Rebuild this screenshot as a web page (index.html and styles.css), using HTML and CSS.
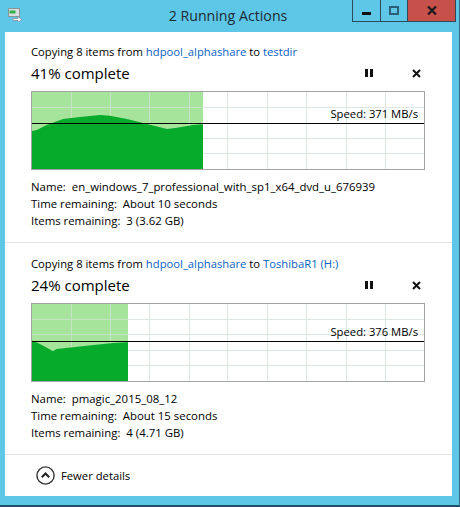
FILE: index.html
```html
<!DOCTYPE html>
<html>
<head>
<meta charset="utf-8">
<link rel="stylesheet" href="styles.css">
</head>
<body>
<div class="window">
  <div class="titlebar">
    <svg class="app-icon" width="14" height="14" viewBox="0 0 14 14">
      <rect x="0.5" y="0.5" width="11" height="8" fill="#d9dde0" stroke="#8a9398"/>
      <rect x="1.5" y="2.5" width="6" height="3" fill="#2bb34a"/>
      <path d="M5 10.5h5v-2l3.5 3-3.5 3v-2H5z" fill="#ffffff" stroke="#7d8a92" stroke-width="0.8"/>
    </svg>
    <div class="title">2 Running Actions</div>
    <div class="caption-buttons">
      <div class="cb cb-min"><span class="min-glyph"></span></div>
      <div class="cb cb-max"><span class="max-glyph"></span></div>
      <div class="cb cb-close">
        <svg width="10" height="9" viewBox="0 0 10 9"><path d="M1 0.5l8 8M9 0.5l-8 8" stroke="#1a1a1a" stroke-width="2.2"/></svg>
      </div>
    </div>
  </div>
  <div class="content">
    <section class="op op-first">
      <div class="op-head">Copying 8 items from <span class="link">hdpool_alphashare</span> to <span class="link">testdir</span></div>
      <div class="op-row">
        <div class="pct">41% complete</div>
        <div class="ctrls">
          <svg class="pause" width="8" height="8" viewBox="0 0 8 8"><rect x="0" y="0" width="3" height="8" fill="#111"/><rect x="5" y="0" width="3" height="8" fill="#111"/></svg>
          <svg class="stop" width="9" height="9" viewBox="0 0 9 9"><path d="M1 1l7 7M8 1l-7 7" stroke="#111" stroke-width="2"/></svg>
        </div>
      </div>
      <div class="graph">
        <svg class="chart" width="392" height="77" viewBox="0 0 392 77">
          <rect x="0" y="0" width="171" height="77" fill="#a6e39b"/>
          <g stroke="#d2e2d6" stroke-width="1" opacity="0.75">
            <path d="M39.5 0V77M78.5 0V77M117.5 0V77M157.5 0V77M195.5 0V77M235.5 0V77M274.5 0V77M314.5 0V77M353.5 0V77"/>
            <path d="M0 15.5H392M0 46.5H392M0 61.5H392"/>
          </g>
          <path d="M0 39 L4.7 38 L14.7 33 L31 27 L48 25 L68 23 L78 23.7 L95 27 L115 32 L135 37 L145 35.7 L161 33 L171 32.3 L171 77 L0 77 Z" fill="#06ab2b"/>
          <path d="M0 31.5H392" stroke="#000" stroke-width="1.2"/>
        </svg>
        <div class="speed speed-1">Speed: 371 MB/s</div>
      </div>
      <div class="details">
        <div>Name:&nbsp; en_windows_7_professional_with_sp1_x64_dvd_u_676939</div>
        <div>Time remaining:&nbsp; About 10 seconds</div>
        <div>Items remaining:&nbsp; 3 (3.62 GB)</div>
      </div>
    </section>
    <section class="op op-second">
      <div class="op-head">Copying 8 items from <span class="link">hdpool_alphashare</span> to <span class="link">ToshibaR1 (H:)</span></div>
      <div class="op-row">
        <div class="pct">24% complete</div>
        <div class="ctrls">
          <svg class="pause" width="8" height="8" viewBox="0 0 8 8"><rect x="0" y="0" width="3" height="8" fill="#111"/><rect x="5" y="0" width="3" height="8" fill="#111"/></svg>
          <svg class="stop" width="9" height="9" viewBox="0 0 9 9"><path d="M1 1l7 7M8 1l-7 7" stroke="#111" stroke-width="2"/></svg>
        </div>
      </div>
      <div class="graph">
        <svg class="chart" width="392" height="77" viewBox="0 0 392 77">
          <rect x="0" y="0" width="96" height="77" fill="#a6e39b"/>
          <g stroke="#d2e2d6" stroke-width="1" opacity="0.75">
            <path d="M39.5 0V77M78.5 0V77M117.5 0V77M157.5 0V77M195.5 0V77M235.5 0V77M274.5 0V77M314.5 0V77M353.5 0V77"/>
            <path d="M0 15.5H392M0 30.5H392M0 46.5H392M0 61.5H392"/>
          </g>
          <path d="M0 36.7 L6 39 L21 47 L24.7 45 L54.7 41.7 L81 39 L96 38.3 L96 77 L0 77 Z" fill="#06ab2b"/>
          <path d="M0 37.5H392" stroke="#000" stroke-width="1.2"/>
        </svg>
        <div class="speed speed-2">Speed: 376 MB/s</div>
      </div>
      <div class="details">
        <div>Name:&nbsp; pmagic_2015_08_12</div>
        <div>Time remaining:&nbsp; About 15 seconds</div>
        <div>Items remaining:&nbsp; 4 (4.71 GB)</div>
      </div>
    </section>
    <div class="footer">
      <svg class="fewer-icon" width="19" height="19" viewBox="0 0 19 19">
        <circle cx="9.5" cy="9.5" r="8.6" fill="none" stroke="#333" stroke-width="1.4"/>
        <path d="M5.8 11.2L9.5 7.5l3.7 3.7" fill="none" stroke="#222" stroke-width="2"/>
      </svg>
      <span>Fewer details</span>
    </div>
  </div>
</div>
</body>
</html>
```

FILE: styles.css
```css
html, body {
  margin: 0;
  padding: 0;
  background: #ffffff;
}

body {
  font-family: "Open Sans", "Noto Sans", sans-serif;
  color: #000;
}

.window {
  width: 460px;
  height: 507px;
  box-sizing: border-box;
  background: #5ec6e7;
  padding: 0 7px 9px 5px;
  border-right: 1px solid #3a6a80;
  border-bottom: 2px solid #1f4f66;
  display: flex;
  flex-direction: column;
}

.titlebar {
  height: 32px;
  flex: none;
  display: grid;
  grid-template-columns: 1fr auto 1fr;
  align-items: start;
  margin-left: -5px;
  margin-right: -4px;
}

.app-icon {
  margin: 8px 0 0 8px;
}

.title {
  font-size: 14.2px;
  line-height: 20px;
  padding-top: 6px;
  color: #1b2b33;
  white-space: nowrap;
}

.caption-buttons {
  justify-self: end;
  display: flex;
  height: 22px;
  border: 1px solid #2b4a5a;
  border-top: none;
  box-sizing: border-box;
}

.cb {
  display: flex;
  align-items: center;
  justify-content: center;
  height: 100%;
}

.cb-min {
  width: 27px;
  border-right: 1px solid #2b4a5a;
}

.cb-max {
  width: 26px;
}

.cb-close {
  width: 47px;
  background: #c7504a;
  border-left: 1px solid #2b4a5a;
}

.min-glyph {
  width: 9px;
  height: 3px;
  background: #111;
  margin-top: 5px;
}

.max-glyph {
  width: 6px;
  height: 5px;
  border: 2px solid #2b5f78;
}

.content {
  flex: 1;
  background: #ffffff;
  display: flex;
  flex-direction: column;
}

.op {
  padding: 14px 27px 13px 26px;
  border-bottom: 1px solid #e3e3e3;
}

.op-first {
  padding-top: 11px;
}

.op-second {
  padding-top: 12px;
}

.op-head {
  font-size: 11.25px;
  line-height: 17px;
  white-space: nowrap;
}

.link {
  color: #0a5fc4;
}

.op-row {
  display: flex;
  align-items: center;
  justify-content: space-between;
  height: 24px;
  margin-top: 1px;
}

.pct {
  font-size: 15px;
  line-height: 22px;
}

.ctrls {
  display: flex;
  align-items: center;
  gap: 39px;
  padding-right: 4px;
}

.graph {
  position: relative;
  margin-top: 6px;
  width: 392px;
  height: 77px;
  border: 1px solid #a3a3a3;
}

.chart {
  display: block;
}

.speed {
  position: absolute;
  right: 6px;
  font-size: 11.25px;
  line-height: 16px;
}

.speed-1 {
  top: 14px;
}

.speed-2 {
  top: 20px;
}

.details {
  margin-top: 8px;
  font-size: 11.4px;
  line-height: 17px;
  white-space: nowrap;
}

.footer {
  flex: 1;
  display: flex;
  align-items: center;
  gap: 6px;
  padding-left: 31px;
  font-size: 11.25px;
}

.fewer-icon {
  display: block;
}
```
